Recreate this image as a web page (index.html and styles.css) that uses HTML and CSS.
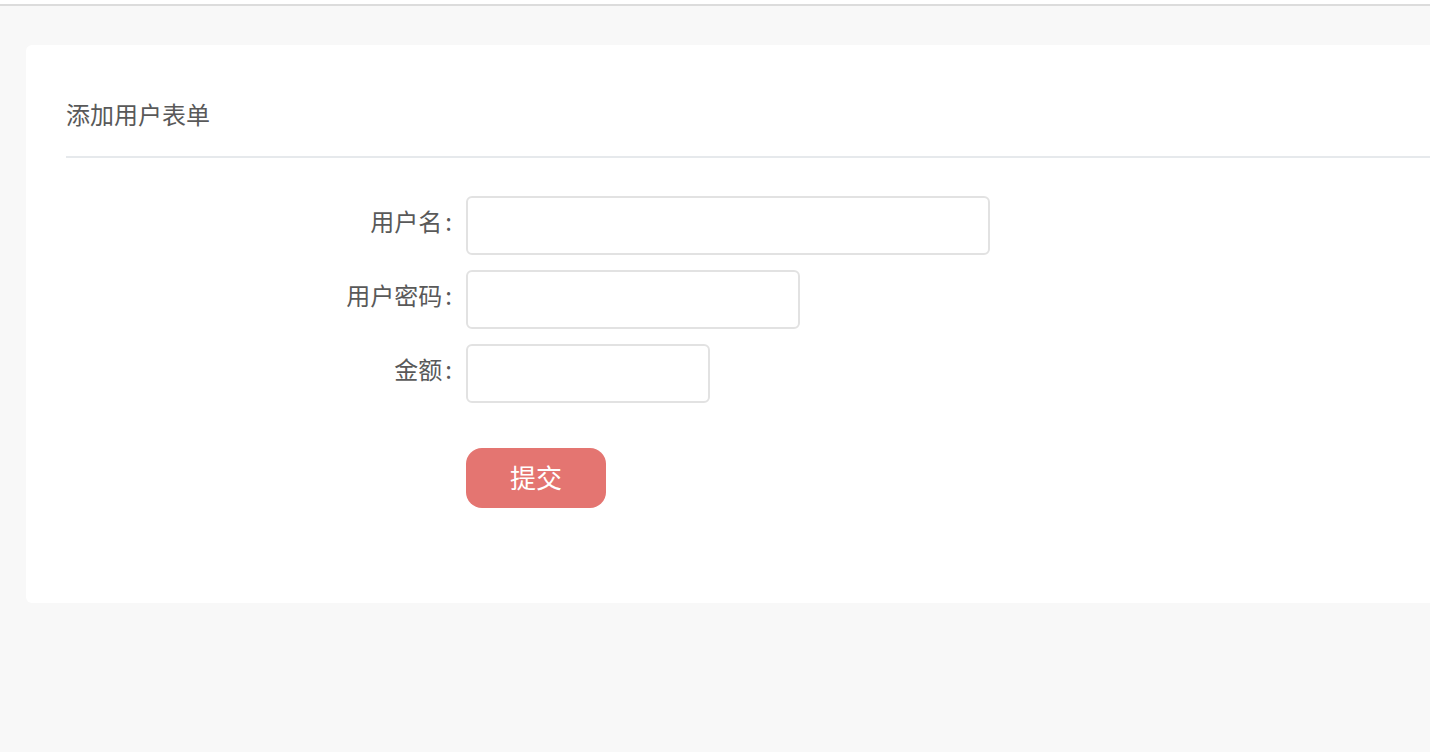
FILE: index.html
```html
<!DOCTYPE html>
<html lang="zh-CN">
<head>
    <meta charset="UTF-8">
    <meta name="viewport" content="width=device-width, initial-scale=1.0">
    <title>添加用户表单</title>
    <link rel="stylesheet" href="styles.css">
</head>
<body>
    <div class="topbar"></div>

    <div class="main">
        <div class="card">
            <div class="card-header">添加用户表单</div>

            <form class="card-body" onsubmit="return false;">
                <div class="form-item">
                    <label class="form-label" for="username">用户名<span class="colon">:</span></label>
                    <input class="form-input input-lg" type="text" id="username" name="username">
                </div>
                <div class="form-item">
                    <label class="form-label" for="password">用户密码<span class="colon">:</span></label>
                    <input class="form-input input-md" type="password" id="password" name="password">
                </div>
                <div class="form-item">
                    <label class="form-label" for="money">金额<span class="colon">:</span></label>
                    <input class="form-input input-sm" type="text" id="money" name="money">
                </div>
                <div class="form-item form-actions">
                    <button class="btn-submit" type="submit">提交</button>
                </div>
            </form>
        </div>
    </div>
</body>
</html>
```

FILE: styles.css
```css
html, body {
    margin: 0;
    padding: 0;
}
body {
    font-family: "Noto Sans CJK SC", "Noto Sans", sans-serif;
    background-color: #f8f8f8;
    color: #595959;
    height: 752px;
    overflow: hidden;
}
.topbar {
    height: 4px;
    background-color: #fff;
    border-bottom: 2px solid #dcdcdc;
}

.main {
    padding: 39px 0 0 26px;
}
.card {
    width: 1440px;
    background-color: #fff;
    border-radius: 6px;
    padding: 0 0 95px 40px;
    box-sizing: border-box;
}
.card-header {
    padding: 39px 0 12px 0;
    line-height: 60px;
    font-size: 24px;
    color: #595959;
    border-bottom: 2px solid #e6e9ec;
}
.card-body {
    margin: 38px 0 0 0;
}

.form-item {
    display: flex;
    align-items: center;
    margin-bottom: 15px;
}
.form-label {
    width: 400px;
    box-sizing: border-box;
    padding: 0 14px 10px 0;
    text-align: right;
    font-size: 24px;
    color: #595959;
}
.form-label .colon {
    margin-left: 3px;
}
.form-input {
    height: 59px;
    box-sizing: border-box;
    border: 2px solid #e2e2e2;
    border-radius: 6px;
    background-color: #fff;
    font-size: 21px;
    padding: 0 14px;
    outline: none;
}
.input-lg { width: 524px; }
.input-md { width: 334px; }
.input-sm { width: 244px; }

.form-actions {
    margin: 45px 0 0 400px;
}
.btn-submit {
    width: 140px;
    height: 60px;
    padding: 0 0 4px 0;
    border: none;
    border-radius: 16px;
    background-color: #e47571;
    color: #fff;
    font-family: inherit;
    font-size: 26px;
    cursor: pointer;
}
```
